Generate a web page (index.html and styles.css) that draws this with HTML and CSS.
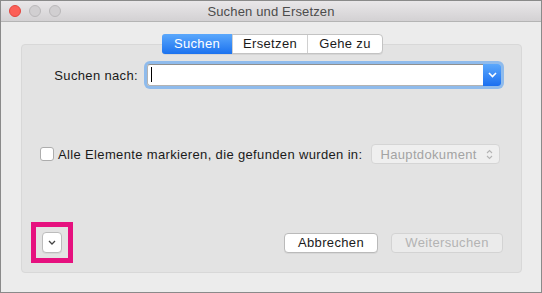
FILE: index.html
```html
<!DOCTYPE html>
<html lang="de">
<head>
    <meta charset="UTF-8">
    <title>Suchen und Ersetzen</title>
    <link rel="stylesheet" href="styles.css">
</head>
<body>
    <div class="window">
        <div class="titlebar">
            <div class="lights">
                <span class="light light-close"></span>
                <span class="light"></span>
                <span class="light"></span>
            </div>
            <div class="title">Suchen und Ersetzen</div>
            <div></div>
        </div>

        <div class="content">
            <div class="tabs">
                <div class="tab tab-active">Suchen</div>
                <div class="tab">Ersetzen</div>
                <div class="tab">Gehe zu</div>
            </div>

            <div class="panel">
                <div class="search-row">
                    <label class="search-label">Suchen nach:</label>
                    <div class="combo">
                        <div class="combo-field"><span class="caret"></span></div>
                        <div class="combo-button">
                            <svg width="9" height="6" viewBox="0 0 9 6"><path d="M1 1l3.5 3.5L8 1" fill="none" stroke="#fff" stroke-width="1.6"/></svg>
                        </div>
                    </div>
                </div>

                <div class="check-row">
                    <span class="checkbox"></span>
                    <span class="check-label">Alle Elemente markieren, die gefunden wurden in:</span>
                    <div class="popup">
                        <span>Hauptdokument</span>
                        <svg width="7" height="11" viewBox="0 0 7 11"><path d="M1 4l2.5-2.5L6 4M1 7l2.5 2.5L6 7" fill="none" stroke="#b4b4b4" stroke-width="1.1"/></svg>
                    </div>
                </div>

                <div class="bottom-row">
                    <div class="highlight">
                        <div class="disclosure">
                            <svg width="8" height="5" viewBox="0 0 8 5"><path d="M1 1l3 3 3-3" fill="none" stroke="#444" stroke-width="1.3"/></svg>
                        </div>
                    </div>
                    <div class="actions">
                        <button class="btn">Abbrechen</button>
                        <button class="btn btn-disabled">Weitersuchen</button>
                    </div>
                </div>
            </div>
        </div>
    </div>
</body>
</html>
```

FILE: styles.css
```css
* {
    margin: 0;
    padding: 0;
    box-sizing: border-box;
    font-family: 'Liberation Sans', Arial, sans-serif;
    letter-spacing: 0.35px;
}

body {
    width: 542px;
    height: 293px;
    overflow: hidden;
    background: #ececec;
}

.window {
    width: 542px;
    height: 293px;
    border: 1px solid #8a8a8a;
    background: #ececec;
    display: flex;
    flex-direction: column;
}

/* Title bar */
.titlebar {
    height: 21px;
    flex-shrink: 0;
    display: grid;
    grid-template-columns: 1fr auto 1fr;
    align-items: center;
    background: linear-gradient(#e9e7e9, #d3d1d3);
    border-bottom: 1px solid #b4b4b4;
}

.lights {
    display: flex;
    gap: 8px;
    padding-left: 8px;
}

.light {
    width: 12px;
    height: 12px;
    border-radius: 50%;
    background: #d1cfd1;
    border: 1px solid #bab8ba;
}

.light-close {
    background: #fc5f57;
    border-color: #e2463f;
}

.title {
    font-size: 13px;
    letter-spacing: 0.15px;
    color: #4c4c4c;
}

/* Content */
.content {
    padding: 12px 19px 0 20px;
    display: flex;
    flex-direction: column;
    align-items: center;
}

.tabs {
    display: flex;
    height: 20px;
    margin-left: 2px;
    margin-bottom: -10px;
    position: relative;
    z-index: 1;
    background: #fff;
    border: 1px solid #c3c3c3;
    border-radius: 4px;
    box-shadow: 0 1px 0 rgba(0, 0, 0, 0.06);
}

.tab {
    font-size: 13px;
    color: #1a1a1a;
    line-height: 18px;
    text-align: center;
    width: 75px;
    border-left: 1px solid #d0d0d0;
}

.tab:first-child {
    border-left: none;
}

.tab-active {
    width: 70px;
    color: #fff;
    background: linear-gradient(#5ba8fc, #1b72ef);
    border-radius: 3px 0 0 3px;
    margin: -1px 0 -1px -1px;
    line-height: 20px;
}

.panel {
    width: 501px;
    height: 229px;
    background: #e3e3e3;
    border: 1px solid #d8d8d8;
    border-radius: 4px;
    padding: 19px 19px 9px 18px;
    display: flex;
    flex-direction: column;
}

/* Search row */
.search-row {
    display: flex;
    align-items: center;
}

.search-label {
    width: 98px;
    text-align: right;
    font-size: 13px;
    color: #1a1a1a;
    margin-right: 9px;
}

.combo {
    display: flex;
    width: 354px;
    height: 22px;
    border-radius: 3px;
    box-shadow: 0 0 0 3px #8fbbec;
}

.combo-field {
    flex: 1;
    background: #fff;
    border: 1px solid #b3b3b3;
    border-top-color: #8f8f8f;
    border-right: none;
    border-radius: 3px 0 0 3px;
    padding: 2px 3px;
}

.caret {
    display: block;
    width: 1px;
    height: 15px;
    background: #000;
}

.combo-button {
    width: 18px;
    display: flex;
    align-items: center;
    justify-content: center;
    background: linear-gradient(#5ba8fc, #1b6ff0);
    border-radius: 0 3px 3px 0;
}

/* Checkbox row */
.check-row {
    display: flex;
    align-items: center;
    margin-top: 58px;
}

.checkbox {
    width: 14px;
    height: 14px;
    background: #fff;
    border: 1px solid #adadad;
    border-radius: 3px;
    margin-right: 4px;
}

.check-label {
    font-size: 13px;
    color: #1a1a1a;
}

.popup {
    margin-left: 9px;
    width: 129px;
    height: 20px;
    display: flex;
    align-items: center;
    justify-content: space-between;
    padding: 0 6px 0 8px;
    background: #efefef;
    border: 1px solid #d5d5d5;
    border-radius: 4px;
    font-size: 13px;
    color: #a3a3a3;
}

/* Bottom row */
.bottom-row {
    margin-top: auto;
    display: flex;
    align-items: center;
}

.highlight {
    margin-left: -9px;
    border: 5px solid #e6117f;
    padding: 5px 6px;
}

.disclosure {
    width: 20px;
    height: 21px;
    background: #fff;
    border: 1px solid #bcbcbc;
    border-radius: 4px;
    display: flex;
    align-items: center;
    justify-content: center;
    box-shadow: 0 1px 0 rgba(0, 0, 0, 0.05);
}

.actions {
    margin-left: auto;
    margin-right: -1px;
    display: flex;
    gap: 13px;
}

.btn {
    height: 20px;
    font-size: 13px;
    color: #1a1a1a;
    background: #fff;
    border: 1px solid #bababa;
    border-radius: 4px;
    box-shadow: 0 1px 0 rgba(0, 0, 0, 0.05);
}

.btn:first-child {
    width: 94px;
}

.btn-disabled {
    width: 112px;
    color: #b3b3b3;
    background: #ebebeb;
    border-color: #d3d3d3;
    box-shadow: none;
}
```
